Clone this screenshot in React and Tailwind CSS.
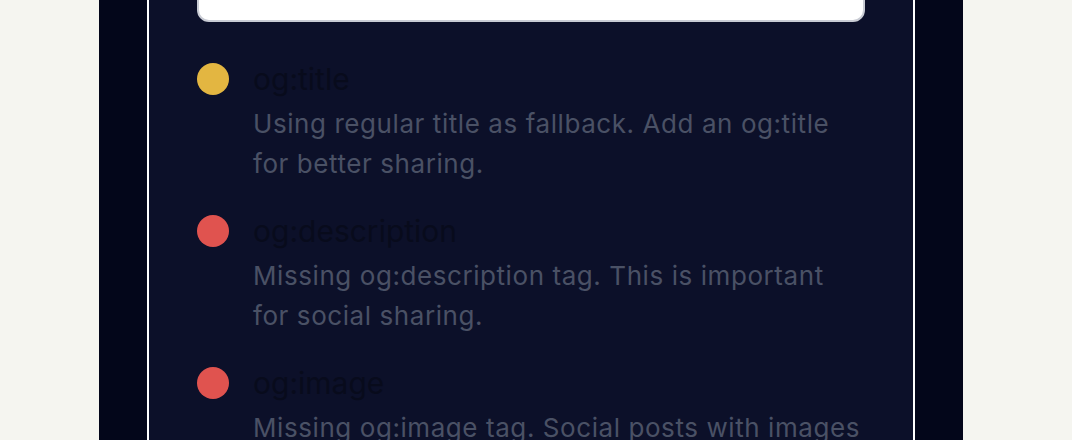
const checks = [
  {
    key: 'og:title',
    color: 'bg-[#e3b641]',
    text: 'Using regular title as fallback. Add an og:title for better sharing.',
  },
  {
    key: 'og:description',
    color: 'bg-[#e0534f]',
    text: 'Missing og:description tag. This is important for social sharing.',
  },
  {
    key: 'og:image',
    color: 'bg-[#e0534f]',
    text: 'Missing og:image tag. Social posts with images get far more engagement.',
  },
];

export default function App() {
  return (
    <div className="h-[440px] w-full overflow-hidden bg-[#f5f5f0] font-['Inter',sans-serif]">
      <div className="ml-[99px] flex h-full w-[864px] flex-col bg-[#03061a] px-12">
        {/* panel */}
        <div className="flex h-full flex-col border-x-2 border-white bg-[#0c1029] px-12">
          <div className="-mt-10 h-[62px] shrink-0 rounded-xl border-2 border-[#c9ccd4] bg-white" />

          <div className="mt-[39px] flex flex-col gap-[29px]">
            {checks.map(item => (
              <div key={item.key} className="flex gap-6">
                <div className={`mt-0.5 h-8 w-8 shrink-0 rounded-full ${item.color}`} />
                <div className="flex flex-col">
                  <div className="text-[30px] leading-9 text-[#080b1c]">{item.key}</div>
                  <p className="mt-[7px] text-[26px] leading-10 tracking-[0.022em] text-[#4a5165]">{item.text}</p>
                </div>
              </div>
            ))}
          </div>
        </div>
      </div>
    </div>
  );
}
